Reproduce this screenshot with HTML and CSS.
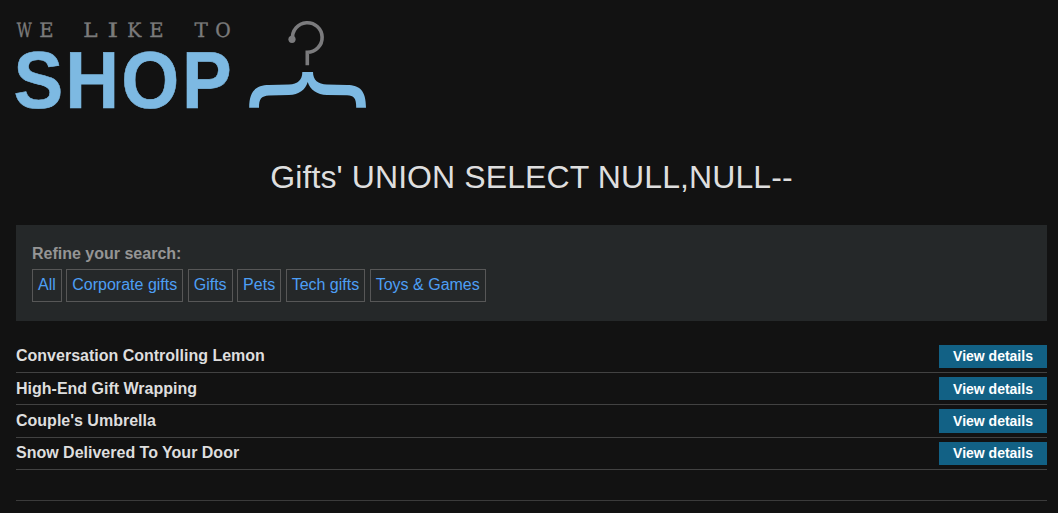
FILE: index.html
```html
<!DOCTYPE html>
<html lang="en">
<head>
<meta charset="utf-8">
<title>We like to shop</title>
<link rel="stylesheet" href="styles.css">
</head>
<body>
<main class="container">
  <svg class="logo" width="352" height="96" viewBox="16 16 352 96" role="img" aria-label="We like to shop">
    <g class="logo-tagline">
      <text transform="translate(16.8 36.6) scale(.73 1)">W</text>
      <text transform="translate(39.2 36.6) scale(.98 1)">E</text>
      <text transform="translate(83.2 36.6) scale(1.08 1)">L</text>
      <text transform="translate(107.500 36.6) scale(1.35 1)">I</text>
      <text transform="translate(127.300 36.6) scale(.94 1)">K</text>
      <text transform="translate(149.300 36.6) scale(.98 1)">E</text>
      <text transform="translate(194.500 36.6) scale(1 1)">T</text>
      <text transform="translate(215.300 36.6) scale(.94 1)">O</text>
    </g>
    <g class="logo-name">
      <text transform="translate(13.5 107.800) scale(.92 1)">S</text>
      <text transform="translate(65.2 107.800) scale(.92 1)">H</text>
      <text transform="translate(121.300 107.800) scale(.92 1)">O</text>
      <text transform="translate(182 107.800) scale(.92 1)">P</text>
    </g>
    <path class="hook" d="M292.6 39A14.8 14.8 0 1 1 307.3 52.3V65.3"/>
    <circle class="hook-tip" cx="292" cy="39.3" r="3.6"/>
    <path class="brace" d="M302.3 72H313C313 80 318 84.300 327 84.500L347 85C360 85 366 91 366 107.700H356.200C356.200 98 354 95.500 347 95.300L327 95C317 94.500 310 90 307.700 82C305.500 90 299 94.500 289 95L269 95.500C261 96 259 99 259 107.700H249.200C249.200 91 256 85 269 85L289 84.500C298 84 302.300 80 302.300 72Z"/>
  </svg>
  <h1 class="title">Gifts' UNION SELECT NULL,NULL--</h1>
  <section class="filters">
    <label class="filters-label">Refine your search:</label>
    <nav class="filter-list">
      <a class="filter">All</a>
      <a class="filter">Corporate gifts</a>
      <a class="filter">Gifts</a>
      <a class="filter">Pets</a>
      <a class="filter">Tech gifts</a>
      <a class="filter">Toys &amp; Games</a>
    </nav>
  </section>
  <section class="products">
    <div class="product"><span>Conversation Controlling Lemon</span><a class="button">View details</a></div>
    <div class="product"><span>High-End Gift Wrapping</span><a class="button">View details</a></div>
    <div class="product"><span>Couple's Umbrella</span><a class="button">View details</a></div>
    <div class="product"><span>Snow Delivered To Your Door</span><a class="button">View details</a></div>
  </section>
  <hr class="divider">
</main>
</body>
</html>
```
FILE: styles.css
```css
* { box-sizing: border-box; }
body {
  margin: 0;
  background: #121212;
  color: #dedede;
  font: 16px/20px "Liberation Sans", Arial, sans-serif;
  overflow: hidden;
}
.container {
  display: flex;
  flex-direction: column;
  padding: 16px 11px 0 16px;
}
.logo { display: block; overflow: visible; }
.logo-tagline {
  font: 20px "DejaVu Serif", serif;
  fill: #7b7b7b;
  stroke: #7b7b7b;
  stroke-width: 0.35;
  text-rendering: geometricPrecision;
}
.logo-name {
  font: bold 81px "Liberation Sans", Arial, sans-serif;
  fill: #7db9e2;
  stroke: #7db9e2;
  stroke-width: 0.6;
  text-rendering: geometricPrecision;
}
.hook { fill: none; stroke: #7b7b7d; stroke-width: 3.6; }
.hook-tip { fill: #7b7b7d; }
.brace { fill: #7db9e2; }
.title {
  margin: 45px 0 0;
  font-size: 32px;
  font-weight: 400;
  line-height: 40px;
  letter-spacing: 0.1px;
  text-align: center;
}
.filters {
  display: flex;
  flex-direction: column;
  height: 96px;
  margin-top: 28px;
  padding: 19px 16px 0;
  background: #252829;
}
.filters-label { font-weight: 700; color: #959595; }
.filter-list { display: flex; gap: 4.5px; margin-top: 5px; }
.filter {
  height: 33px;
  padding: 5px;
  border: 1px solid #575757;
  color: #4d9ff5;
}
.products { margin-top: 20px; }
.product {
  display: flex;
  align-items: center;
  justify-content: space-between;
  height: 32.33px;
  border-bottom: 1px solid #424242;
  font-weight: 700;
}
.product:first-child { height: 32px; }
.product:first-child span { padding-bottom: 1px; }
.button {
  display: flex;
  align-items: center;
  justify-content: center;
  width: 108px;
  height: 23.33px;
  background: #126185;
  color: #fff;
  font-size: 14px;
}
.divider { width: 100%; height: 1px; margin: 30px 0 0; border: 0; background: #3b3b3b; }
```
